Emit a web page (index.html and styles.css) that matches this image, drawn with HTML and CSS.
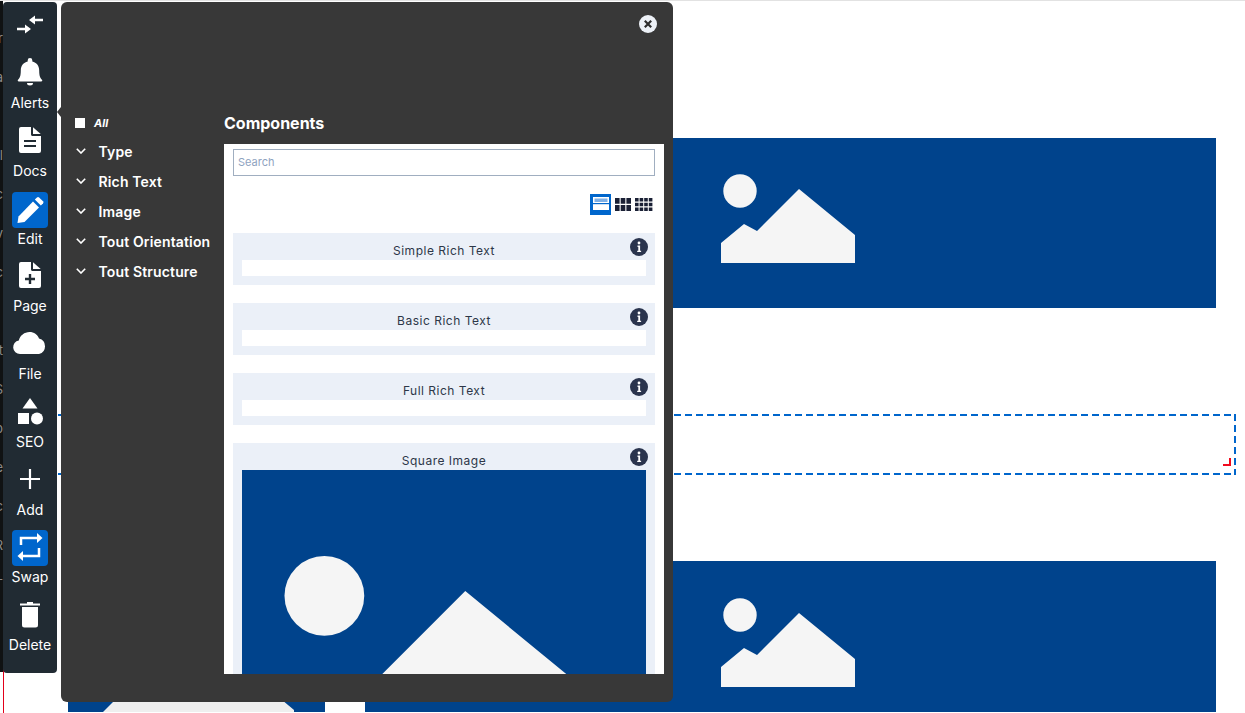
FILE: index.html
```html
<!DOCTYPE html>
<html lang="en">
<head>
    <meta charset="UTF-8">
    <title>Components</title>
    <link rel="stylesheet" href="styles.css">
</head>
<body>
    <svg class="defs" width="0" height="0">
        <symbol id="placeholder" viewBox="0 0 134 89">
            <circle cx="19" cy="17" r="16.7" fill="#f5f5f5"/>
            <polygon points="0,89 0,69 23,50 36,57 78,15 134,61 134,89" fill="#f5f5f5"/>
        </symbol>
        <symbol id="info" viewBox="0 0 18 18">
            <circle cx="9" cy="9" r="9" fill="#2a344d"/>
            <circle cx="9" cy="5" r="1.4" fill="#fff"/>
            <path d="M7.5 7.6h2.6v5.2h1v1.3H7.2v-1.3h1.1V8.9H7.5z" fill="#fff"/>
        </symbol>
    </svg>

    <!-- page being edited, sits behind the tools -->
    <div class="edge-text">r<br>a<br><br>l<br>c<br>v<br>c<br><br>t<br>S<br>p<br>e<br>c<br>R<br>T</div>
    <div class="edge-line"></div>
    <main class="page">
        <div class="banner banner-top">
            <svg class="banner-icon"><use href="#placeholder"/></svg>
        </div>
        <div class="selected-block">
            <span class="resize-corner"></span>
        </div>
        <div class="page-row">
            <div class="side-card">
                <svg class="side-card-icon" viewBox="0 0 257 151">
                    <polygon points="123,63 226,149 226,151 35,151" fill="#efefef"/>
                </svg>
            </div>
            <div class="banner banner-low">
                <svg class="banner-icon"><use href="#placeholder"/></svg>
            </div>
        </div>
    </main>

    <nav class="toolbar">
        <div class="toolbar-head">
            <svg width="30" height="20" viewBox="0 0 30 20" fill="#fff">
                <path d="M28 3.800h-8V.5L14 5l6 4.500V6.200h8z"/>
                <path d="M2 12.800h8V9.500l6 4.500-6 4.500v-3.300H2z"/>
            </svg>
        </div>
        <a class="tool">
            <span class="tool-icon">
                <svg width="36" height="36" viewBox="0 0 36 36" fill="#fff">
                    <path d="M18 4a2.300 2.300 0 0 1 2.300 2.300v1.100c4.200.9 6.900 4.400 6.900 9 0 6.200 1.300 7.700 2.800 9.300.5.500.4 1.800-.9 1.800H6.900c-1.300 0-1.400-1.300-.9-1.800 1.500-1.600 2.800-3.100 2.800-9.300 0-4.600 2.700-8.100 6.900-9V6.300A2.300 2.300 0 0 1 18 4z"/>
                    <path d="M15 29h6a3 2.500 0 0 1-6 0z"/>
                </svg>
            </span>
            <span class="tool-label">Alerts</span>
        </a>
        <a class="tool">
            <span class="tool-icon">
                <svg width="36" height="36" viewBox="0 0 36 36" fill="#fff">
                    <path d="M9 5h10v7.500c0 .8.700 1.500 1.500 1.500H29v15a2 2 0 0 1-2 2H9a2 2 0 0 1-2-2V7a2 2 0 0 1 2-2z"/>
                    <path d="M21 5.300 28.700 12H21z"/>
                    <path d="M12 19h12M12 24h12" stroke="#212b33" stroke-width="2.200"/>
                </svg>
            </span>
            <span class="tool-label">Docs</span>
        </a>
        <a class="tool is-active">
            <span class="tool-icon">
                <svg width="36" height="36" viewBox="0 0 36 36" fill="#fff">
                    <polygon points="5.500,31 6.500,24.500 21,9.500 27,15.500 12.500,30"/>
                    <path d="M22.800 7.600 25 5.400a1.500 1.500 0 0 1 2.100 0l3.900 3.900a1.500 1.500 0 0 1 0 2.100l-2.200 2.200z"/>
                </svg>
            </span>
            <span class="tool-label">Edit</span>
        </a>
        <a class="tool">
            <span class="tool-icon">
                <svg width="36" height="36" viewBox="0 0 36 36" fill="#fff">
                    <path d="M9 5h10v7.500c0 .8.700 1.500 1.500 1.500H29v15a2 2 0 0 1-2 2H9a2 2 0 0 1-2-2V7a2 2 0 0 1 2-2z"/>
                    <path d="M21 5.300 28.700 12H21z"/>
                    <path d="M18 17v10M13 22h10" stroke="#212b33" stroke-width="2.400"/>
                </svg>
            </span>
            <span class="tool-label">Page</span>
        </a>
        <a class="tool">
            <span class="tool-icon">
                <svg width="36" height="36" viewBox="0 0 36 36" fill="#fff">
                    <path d="M8 29a6.800 6.800 0 0 1-1.200-13.500C8 10.500 12.500 7 17.500 7c4.500 0 8 2.500 9.500 6.500A8 8 0 0 1 27 29z"/>
                </svg>
            </span>
            <span class="tool-label">File</span>
        </a>
        <a class="tool">
            <span class="tool-icon">
                <svg width="36" height="36" viewBox="0 0 36 36" fill="#fff">
                    <polygon points="18,5 25.500,15.500 10.500,15.500"/>
                    <rect x="6" y="20" width="11" height="11"/>
                    <circle cx="25" cy="25.500" r="6"/>
                </svg>
            </span>
            <span class="tool-label">SEO</span>
        </a>
        <a class="tool">
            <span class="tool-icon">
                <svg width="36" height="36" viewBox="0 0 36 36" stroke="#fff" stroke-width="2.200">
                    <path d="M18 8v20M8 18h20"/>
                </svg>
            </span>
            <span class="tool-label">Add</span>
        </a>
        <a class="tool is-active">
            <span class="tool-icon">
                <svg width="36" height="36" viewBox="0 0 36 36" fill="#fff">
                    <path d="M9 15V8h16" fill="none" stroke="#fff" stroke-width="2.500"/>
                    <polygon points="25,3 30.500,8 25,13"/>
                    <path d="M27 18v8H11" fill="none" stroke="#fff" stroke-width="2.500"/>
                    <polygon points="11,21 5.500,26 11,31"/>
                </svg>
            </span>
            <span class="tool-label">Swap</span>
        </a>
        <a class="tool">
            <span class="tool-icon">
                <svg width="36" height="36" viewBox="0 0 36 36" fill="#fff">
                    <path d="M8 7.500h20v2H8zM15 6h6v2h-6z"/>
                    <path d="M10 11h16v18a2.500 2.500 0 0 1-2.500 2.500h-11A2.500 2.500 0 0 1 10 29z"/>
                </svg>
            </span>
            <span class="tool-label">Delete</span>
        </a>
    </nav>

    <section class="panel">
        <span class="panel-arrow"></span>
        <div class="panel-head">
            <svg class="panel-close" width="18" height="18" viewBox="0 0 18 18">
                <circle cx="9" cy="9" r="9" fill="#edf1f7"/>
                <path d="M5.800 5.800l6.400 6.400M12.200 5.800l-6.400 6.400" stroke="#2d2d2d" stroke-width="2.200"/>
            </svg>
        </div>
        <div class="panel-body">
            <aside class="filters">
                <label class="filter-all"><span class="check"></span>All</label>
                <div class="filter"><svg class="chevron" viewBox="0 0 10 6"><path d="M.8.800 5 5l4.200-4.200"/></svg>Type</div>
                <div class="filter"><svg class="chevron" viewBox="0 0 10 6"><path d="M.8.800 5 5l4.200-4.200"/></svg>Rich Text</div>
                <div class="filter"><svg class="chevron" viewBox="0 0 10 6"><path d="M.8.800 5 5l4.200-4.200"/></svg>Image</div>
                <div class="filter"><svg class="chevron" viewBox="0 0 10 6"><path d="M.8.800 5 5l4.200-4.200"/></svg>Tout Orientation</div>
                <div class="filter"><svg class="chevron" viewBox="0 0 10 6"><path d="M.8.800 5 5l4.200-4.200"/></svg>Tout Structure</div>
            </aside>
            <div class="components">
                <h2>Components</h2>
                <div class="results">
                    <input class="search" type="text" placeholder="Search">
                    <div class="views">
                        <span class="view is-active">
                            <svg width="21" height="21" viewBox="0 0 21 21">
                                <rect x="3" y="3" width="16" height="13" fill="#fff"/>
                                <rect x="4.500" y="4.500" width="13" height="3.500" fill="#7fb0e6"/>
                                <rect x="3" y="9" width="16" height="1.200" fill="#0066cc"/>
                            </svg>
                        </span>
                        <svg width="16" height="13" viewBox="0 0 16 13" fill="#1a2035">
                            <path d="M0 0h4.600v5.800H0zM5.700 0h4.600v5.800H5.700zM11.400 0H16v5.800h-4.600zM0 7h4.600v6H0zM5.700 7h4.600v6H5.700zM11.400 7H16v6h-4.600z"/>
                        </svg>
                        <svg width="18" height="13" viewBox="0 0 18 13" fill="#1a2035">
                            <path d="M0 0h3.600v3.600H0zM4.600 0h3.600v3.600H4.600zM9.200 0h3.600v3.600H9.200zM13.800 0h3.600v3.600h-3.600zM0 4.700h3.600v3.600H0zM4.600 4.700h3.600v3.600H4.600zM9.200 4.700h3.600v3.600H9.200zM13.800 4.700h3.600v3.600h-3.600zM0 9.400h3.600V13H0zM4.600 9.400h3.600V13H4.600zM9.200 9.400h3.600V13H9.200zM13.800 9.400h3.600V13h-3.600z"/>
                        </svg>
                    </div>
                    <article class="card">
                        <svg class="card-info"><use href="#info"/></svg>
                        <h3>Simple Rich Text</h3>
                        <div class="card-bar"></div>
                    </article>
                    <article class="card">
                        <svg class="card-info"><use href="#info"/></svg>
                        <h3>Basic Rich Text</h3>
                        <div class="card-bar"></div>
                    </article>
                    <article class="card">
                        <svg class="card-info"><use href="#info"/></svg>
                        <h3>Full Rich Text</h3>
                        <div class="card-bar"></div>
                    </article>
                    <article class="card card-last">
                        <svg class="card-info"><use href="#info"/></svg>
                        <h3>Square Image</h3>
                        <div class="card-image">
                            <svg class="card-image-icon"><use href="#placeholder"/></svg>
                        </div>
                    </article>
                </div>
            </div>
        </div>
    </section>
</body>
</html>
```

FILE: styles.css
```css
* {
    box-sizing: border-box;
}
html, body {
    height: 713px;
    overflow: hidden;
}
body {
    position: relative;
    margin: 0;
    background-color: #fff;
    border-top: 1px solid #e2e2e2;
    font-family: Inter, "Liberation Sans", sans-serif;
}
.defs {
    position: absolute;
}

/* page behind the tools */
.page {
    padding-top: 137px;
}
.banner {
    display: flex;
    width: 851px;
    height: 170px;
    margin-left: 365px;
    padding: 36px 0 0 356px;
    background-color: #00438c;
}
.banner-low {
    margin-left: 0;
    height: 151px;
    padding-top: 37px;
}
.banner-icon {
    width: 134px;
    height: 89px;
}
.selected-block {
    position: relative;
    width: 1233px;
    height: 61px;
    margin: 106px 0 86px 3px;
    background-image:
        linear-gradient(90deg, #0066cc 7px, transparent 7px),
        linear-gradient(90deg, #0066cc 7px, transparent 7px),
        linear-gradient(#0066cc 7px, transparent 7px);
    background-size: 11px 2px, 11px 2px, 2px 11px;
    background-position: left top, left bottom, right top;
    background-repeat: repeat-x, repeat-x, repeat-y;
}
.resize-corner {
    position: absolute;
    right: 5px;
    bottom: 9px;
    width: 8px;
    height: 8px;
    border-right: 2px solid #f00a1e;
    border-bottom: 2px solid #f00a1e;
}
.page-row {
    display: flex;
    gap: 40px;
    padding-left: 68px;
}
.side-card {
    width: 257px;
    height: 151px;
    background-color: #00438c;
}
.side-card-icon {
    display: block;
    width: 257px;
    height: 151px;
}
.edge-text {
    position: absolute;
    top: 0;
    left: 0;
    width: 3px;
    height: 671px;
    padding-top: 18px;
    overflow: hidden;
    background-color: #101213;
    color: #8a8a8a;
    font-size: 13px;
    line-height: 39px;
    direction: rtl;
}
.edge-line {
    position: absolute;
    top: 655px;
    left: 3px;
    width: 1px;
    height: 58px;
    background-color: #e2001a;
}

/* left tool bar */
.toolbar {
    position: absolute;
    top: 1px;
    left: 3px;
    width: 54px;
    height: 671px;
    background-color: #212b33;
    border-radius: 4px;
}
.toolbar-head {
    display: flex;
    justify-content: center;
    height: 40px;
    padding-top: 13px;
}
.tool {
    display: flex;
    flex-direction: column;
    align-items: center;
    height: 67.75px;
    padding-top: 12px;
}
.tool-icon {
    display: block;
    flex: none;
    width: 36px;
    height: 36px;
    margin-bottom: 6px;
}
.tool-icon svg {
    display: block;
}
.tool.is-active .tool-icon {
    margin-top: 2px;
    margin-bottom: 4px;
    background-color: #0066cc;
    border-radius: 4px;
}
.tool-label {
    color: #fff;
    font-size: 14px;
    line-height: 14px;
}

/* components panel */
.panel {
    position: absolute;
    top: 1px;
    left: 61px;
    width: 612px;
    height: 700px;
    background-color: #383838;
    border-radius: 6px;
}
.panel-arrow {
    position: absolute;
    top: 105px;
    left: -4px;
    width: 0;
    height: 0;
    border-top: 5px solid transparent;
    border-bottom: 5px solid transparent;
    border-right: 4px solid #383838;
}
.panel-head {
    display: flex;
    justify-content: flex-end;
    height: 106px;
    padding: 13px 16px 0 0;
}
.panel-body {
    display: flex;
}
.filters {
    width: 163px;
    padding-left: 14px;
    color: #fff;
    font-size: 14px;
    font-weight: 600;
    letter-spacing: .15px;
}
.filter-all {
    display: flex;
    align-items: center;
    height: 28px;
    padding-top: 2px;
    font-size: 11px;
    font-style: italic;
    font-weight: 700;
    letter-spacing: 0;
}
.check {
    width: 10px;
    height: 10px;
    margin-right: 9px;
    background-color: #fff;
}
.filter {
    display: flex;
    align-items: center;
    height: 30px;
}
.chevron {
    width: 10px;
    height: 6px;
    margin: 0 13px 0 .5px;
    fill: none;
    stroke: #fff;
    stroke-width: 1.600;
}
.components {
    width: 440px;
}
.components h2 {
    margin: 0;
    height: 36px;
    color: #fff;
    font-size: 16px;
    font-weight: 700;
    line-height: 30px;
}
.results {
    height: 530px;
    padding: 5px 9px 0;
    overflow: hidden;
    background-color: #fff;
}
.search {
    display: block;
    width: 100%;
    height: 27px;
    padding: 0 4px 2px;
    border: 1px solid #a0aec0;
    border-radius: 0;
    outline: none;
    font-family: inherit;
    font-size: 11px;
}
.search::placeholder {
    color: #8fa3bf;
}
.views {
    display: flex;
    align-items: center;
    justify-content: flex-end;
    gap: 4px;
    height: 21px;
    margin: 18px 2px 18px 0;
}
.view.is-active {
    width: 21px;
    height: 21px;
    background-color: #0066cc;
}
.view svg {
    display: block;
}
.card {
    position: relative;
    margin-bottom: 18px;
    padding: 0 9px 9px;
    background-color: #ebf0f8;
}
.card-last {
    height: 231px;
    overflow: hidden;
}
.card h3 {
    margin: 0;
    height: 27px;
    padding-top: 9px;
    color: #2d3748;
    font-size: 12px;
    font-weight: 400;
    line-height: 17px;
    letter-spacing: .5px;
    text-align: center;
}
.card-bar {
    height: 16px;
    background-color: #fff;
}
.card-info {
    position: absolute;
    top: 5px;
    right: 7px;
    width: 18px;
    height: 18px;
}
.card-image {
    height: 404px;
    padding: 85px 0 0 37px;
    background-color: #00438c;
}
.card-image-icon {
    width: 320px;
    height: 213px;
}
```
